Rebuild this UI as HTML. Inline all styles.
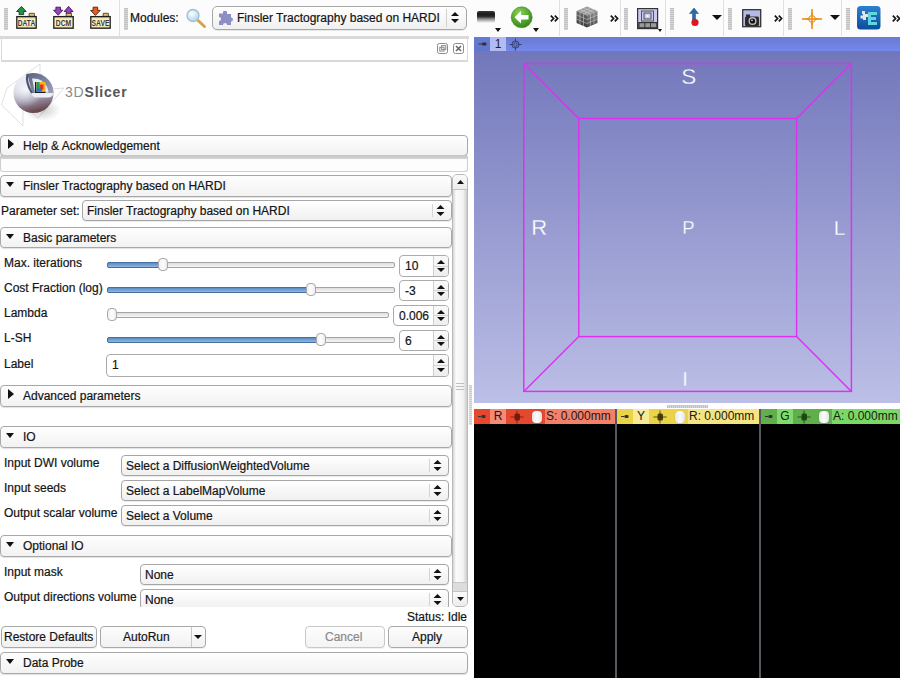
<!DOCTYPE html>
<html><head><meta charset="utf-8">
<style>
*{margin:0;padding:0;box-sizing:border-box}
html,body{width:900px;height:678px;overflow:hidden;background:#fff;font-family:"Liberation Sans",sans-serif}
.a{position:absolute}
.t{position:absolute;font-size:12px;line-height:14px;white-space:nowrap;color:#141414;-webkit-text-stroke:0.2px currentColor}
#tb{left:0;top:0;width:900px;height:37px;background:#fcfcfc;border-bottom:1px solid #d4d4d4}
.grip{position:absolute;top:8px;width:4px;height:22px;background:repeating-linear-gradient(#c2c2c2 0 1px,#d6d6d6 1px 2px)}
.sep{position:absolute;top:0;width:1px;height:36px;background:#e0e0e0}
.btn{position:absolute;border:1px solid #a9a9a9;border-radius:4px;background:linear-gradient(#fdfdfd,#f1f1f1);box-shadow:0 1px 0 rgba(0,0,0,0.06)}
.cb{position:absolute;border:1px solid #a8a8a8;border-radius:4px;background:linear-gradient(#fefefe,#f2f2f2);box-shadow:0 1px 1px rgba(0,0,0,0.12)}
.tri-r{position:absolute;width:0;height:0;border-top:5px solid transparent;border-bottom:5px solid transparent;border-left:6px solid #111}
.tri-d{position:absolute;width:0;height:0;border-left:4.7px solid transparent;border-right:4.7px solid transparent;border-top:5.6px solid #111}
.combo{position:absolute;border:1px solid #a6a6a6;border-radius:4px;background:linear-gradient(#ffffff,#f0f0f0);box-shadow:0 1px 0 rgba(0,0,0,0.08)}
.csep{position:absolute;width:1px;background:#d4d4d4}
.spin{position:absolute;border:1px solid #ababab;border-radius:4px;background:#fff}
.groove{position:absolute;height:6px;border:1px solid #a4a4a4;border-radius:2px;background:linear-gradient(#dedede,#f6f6f6)}
.fill{position:absolute;height:6px;border:1px solid #46709e;border-radius:2px;background:linear-gradient(#5a8cc6,#90b6e0)}
.knob{position:absolute;width:10px;height:13px;border:1px solid #a8a8a8;border-radius:4px;background:linear-gradient(90deg,#f0f0f0,#fdfdfd 50%,#ececec)}
</style></head><body>

<div id="tb" class="a" style="height:36px;border:none"></div>
<div class="grip" style="left:4px"></div>
<svg class="a" style="left:12px;top:3px" width="30" height="30" viewBox="0 0 30 30"><defs><linearGradient id="fdDATA" x1="0" y1="0" x2="0" y2="1"><stop offset="0" stop-color="#e2c870"/><stop offset="0.25" stop-color="#f8eec8"/><stop offset="0.75" stop-color="#fbf4d8"/><stop offset="1" stop-color="#e0c878"/></linearGradient></defs><path d="M9.399999999999999 3.4 L14.2 8.5 L11.7 8.5 L11.7 11.6 L7.099999999999999 11.6 L7.099999999999999 8.5 L4.6 8.5Z" fill="#23904a" stroke="#1a3a22" stroke-width="0.9" stroke-linejoin="round"/><path d="M17 13.4 L17.3 10.3 L22.3 10.3 L22.6 13.4Z" fill="#dcc070" stroke="#3a3020" stroke-width="0.8"/><rect x="4.8" y="13.6" width="19.4" height="11.6" fill="url(#fdDATA)" stroke="#1e1e1e" stroke-width="1.3"/><text x="14.5" y="22.8" font-family="Liberation Sans" font-size="8.6" font-weight="bold" text-anchor="middle" fill="#3a3a3a" textLength="17.5" lengthAdjust="spacingAndGlyphs">DATA</text></svg>
<svg class="a" style="left:49px;top:3px" width="30" height="30" viewBox="0 0 30 30"><defs><linearGradient id="fdDCM" x1="0" y1="0" x2="0" y2="1"><stop offset="0" stop-color="#e2c870"/><stop offset="0.25" stop-color="#f8eec8"/><stop offset="0.75" stop-color="#fbf4d8"/><stop offset="1" stop-color="#e0c878"/></linearGradient></defs><path d="M9.2 12.2 L13.8 7.2 L11.5 7.2 L11.5 4.2 L6.8999999999999995 4.2 L6.8999999999999995 7.2 L4.6 7.2Z" fill="#9a40c0" stroke="#3a1a4a" stroke-width="0.9" stroke-linejoin="round"/><path d="M19.6 3.4 L24.0 8.5 L21.900000000000002 8.5 L21.900000000000002 10.8 L17.3 10.8 L17.3 8.5 L15.2 8.5Z" fill="#9a40c0" stroke="#3a1a4a" stroke-width="0.9" stroke-linejoin="round"/><path d="M17 13.4 L17.3 10.3 L22.3 10.3 L22.6 13.4Z" fill="#dcc070" stroke="#3a3020" stroke-width="0.8"/><rect x="4.8" y="13.6" width="19.4" height="11.6" fill="url(#fdDCM)" stroke="#1e1e1e" stroke-width="1.3"/><text x="14.5" y="22.8" font-family="Liberation Sans" font-size="8.6" font-weight="bold" text-anchor="middle" fill="#3a3a3a" textLength="15.5" lengthAdjust="spacingAndGlyphs">DCM</text></svg>
<svg class="a" style="left:86px;top:3px" width="30" height="30" viewBox="0 0 30 30"><defs><linearGradient id="fdSAVE" x1="0" y1="0" x2="0" y2="1"><stop offset="0" stop-color="#e2c870"/><stop offset="0.25" stop-color="#f8eec8"/><stop offset="0.75" stop-color="#fbf4d8"/><stop offset="1" stop-color="#e0c878"/></linearGradient></defs><path d="M9.399999999999999 12.4 L14.2 7.4 L11.7 7.4 L11.7 4.2 L7.099999999999999 4.2 L7.099999999999999 7.4 L4.6 7.4Z" fill="#e85a1e" stroke="#4a2010" stroke-width="0.9" stroke-linejoin="round"/><path d="M17 13.4 L17.3 10.3 L22.3 10.3 L22.6 13.4Z" fill="#dcc070" stroke="#3a3020" stroke-width="0.8"/><rect x="4.8" y="13.6" width="19.4" height="11.6" fill="url(#fdSAVE)" stroke="#1e1e1e" stroke-width="1.3"/><text x="14.5" y="22.8" font-family="Liberation Sans" font-size="8.6" font-weight="bold" text-anchor="middle" fill="#3a3a3a" textLength="18" lengthAdjust="spacingAndGlyphs">SAVE</text></svg>
<div class="sep" style="left:119px"></div>
<div class="grip" style="left:124px"></div>
<div class="t" style="left:130px;top:11px;color:#111">Modules:</div>
<svg class="a" style="left:185px;top:8px" width="22" height="21" viewBox="0 0 22 21">
 <defs><radialGradient id="lens" cx="0.4" cy="0.35" r="0.7"><stop offset="0" stop-color="#ffffff"/><stop offset="1" stop-color="#a8d4ea"/></radialGradient></defs>
 <line x1="12.5" y1="12" x2="19.5" y2="18.5" stroke="#dca04a" stroke-width="3" stroke-linecap="round"/>
 <circle cx="8" cy="7.5" r="6" fill="url(#lens)" stroke="#9cc2d4" stroke-width="1.3"/>
</svg>
<div class="combo" style="left:212px;top:6px;width:255px;height:24px;border-radius:5px"></div>
<svg class="a" style="left:218px;top:11px" width="16" height="15" viewBox="0 0 16 15">
 <path d="M5 1.5 a2 2 0 0 1 4 0 v1.5 h4 v3.5 a2 2 0 0 1 0 4 v3.5 h-4 a2 2 0 0 0 -4 0 h-4 v-4 a2 2 0 0 0 0 -4 v-3.5 h4 z" fill="#8d8fc4"/>
</svg>
<div class="t" style="left:237px;top:11px">Finsler Tractography based on HARDI</div>
<div class="a" style="left:446px;top:9px;width:1px;height:18px;background:#d0d0d0"></div>
<svg class="a" style="left:450px;top:11px" width="10" height="13" viewBox="0 0 10 13"><path d="M1 5 L5 1 L9 5 Z M1 8 L5 12 L9 8 Z" fill="#111"/></svg>
<div class="a" style="left:477px;top:11px;width:18px;height:12px;border-radius:2px 2px 0 0;background:linear-gradient(#3a3a3a,#1a1a1a 25%,#2a2a2a 45%,#9a9a9a 70%,rgba(255,255,255,0))"></div>
<svg class="a" style="left:495px;top:28px" width="6" height="4"><path d="M0 0 L6 0 L3.0 4Z" fill="#111"/></svg>
<svg class="a" style="left:510px;top:6px" width="24" height="24" viewBox="0 0 24 24">
 <defs><radialGradient id="gr" cx="0.4" cy="0.3" r="0.8"><stop offset="0" stop-color="#8fd45a"/><stop offset="0.6" stop-color="#4da02a"/><stop offset="1" stop-color="#2e7a18"/></radialGradient></defs>
 <circle cx="11.7" cy="11.3" r="10.5" fill="url(#gr)" stroke="#3a8a20" stroke-width="0.6"/>
 <path d="M4.5 11.3 L11 5 L11 9 L18.5 9 L18.5 13.6 L11 13.6 L11 17.6 Z" fill="#fff"/>
</svg>
<svg class="a" style="left:533px;top:28px" width="6" height="4"><path d="M0 0 L6 0 L3.0 4Z" fill="#111"/></svg>
<svg class="a" style="left:550px;top:15px" width="9" height="7" viewBox="0 0 9 7"><path d="M0.8 0.6 L3.6 3.5 L0.8 6.4 M4.8 0.6 L7.6 3.5 L4.8 6.4" fill="none" stroke="#151515" stroke-width="1.7"/></svg>
<div class="sep" style="left:559px"></div>
<div class="grip" style="left:564px"></div>
<svg class="a" style="left:575px;top:5px" width="24" height="24" viewBox="0 0 24 24"><defs><linearGradient id="cl" x1="0" y1="0" x2="0" y2="1"><stop offset="0" stop-color="#6a6a6a"/><stop offset="1" stop-color="#3a3a3a"/></linearGradient><linearGradient id="cr" x1="0" y1="0" x2="0" y2="1"><stop offset="0" stop-color="#8a8a8a"/><stop offset="1" stop-color="#4a4a4a"/></linearGradient></defs><path d="M12 1.5 L22.5 6 L12 10.5 L1.5 6Z" fill="#9a9a9a"/><path d="M15.50 3.00 L5.00 7.50 M8.50 3.00 L19.00 7.50 M19.00 4.50 L8.50 9.00 M5.00 4.50 L15.50 9.00 " stroke="#d8d8d8" stroke-width="0.7" fill="none" opacity="0.7"/><path d="M1.5 6 L12 10.5 L12 22.5 L1.5 18Z" fill="url(#cl)"/><path d="M5.00 7.50 L5.00 19.50 M1.50 10.00 L12.00 14.50 M8.50 9.00 L8.50 21.00 M1.50 14.00 L12.00 18.50 " stroke="#d8d8d8" stroke-width="0.7" fill="none" opacity="0.7"/><path d="M12 10.5 L22.5 6 L22.5 18 L12 22.5Z" fill="url(#cr)"/><path d="M15.50 9.00 L15.50 21.00 M12.00 14.50 L22.50 10.00 M19.00 7.50 L19.00 19.50 M12.00 18.50 L22.50 14.00 " stroke="#d8d8d8" stroke-width="0.7" fill="none" opacity="0.7"/></svg>
<svg class="a" style="left:610px;top:15px" width="9" height="7" viewBox="0 0 9 7"><path d="M0.8 0.6 L3.6 3.5 L0.8 6.4 M4.8 0.6 L7.6 3.5 L4.8 6.4" fill="none" stroke="#151515" stroke-width="1.7"/></svg>
<div class="sep" style="left:620px"></div>
<div class="grip" style="left:624px"></div>
<svg class="a" style="left:637px;top:8px" width="26" height="25" viewBox="0 0 26 25">
 <rect x="0.6" y="0.6" width="20" height="20" fill="#c9c9ef" stroke="#333" stroke-width="1.2"/>
 <rect x="4.5" y="3" width="12" height="10" fill="none" stroke="#555" stroke-width="1"/>
 <rect x="7" y="5" width="7" height="6" fill="none" stroke="#555" stroke-width="1"/>
 <rect x="9.5" y="7" width="2" height="2" fill="#fff"/>
 <rect x="1.2" y="14" width="19" height="6.2" fill="#333"/>
 <rect x="2.5" y="15.2" width="4.8" height="4" fill="#999"/>
 <rect x="8.3" y="15.2" width="4.8" height="4" fill="#999"/>
 <rect x="14" y="15.2" width="5.3" height="4" fill="#999"/>
 <path d="M21 21 L25 21 L23 24Z" fill="#111"/>
</svg>
<div class="sep" style="left:665px"></div>
<div class="grip" style="left:670px"></div>
<svg class="a" style="left:688px;top:7px" width="12" height="21" viewBox="0 0 12 21">
 <path d="M6 1 L10.5 6.5 L7.5 6.5 L7.5 13 L4.5 13 L4.5 6.5 L1.5 6.5 Z" fill="#2a6aa8" stroke="#1c4a78" stroke-width="0.5"/>
 <circle cx="7" cy="15.5" r="3.6" fill="#e0141e"/>
</svg>
<svg class="a" style="left:712px;top:15px" width="10" height="5"><path d="M0 0 L10 0 L5.0 5Z" fill="#111"/></svg>
<div class="sep" style="left:723px"></div>
<div class="grip" style="left:728px"></div>
<svg class="a" style="left:742px;top:9px" width="20" height="19" viewBox="0 0 20 19">
 <rect x="0.7" y="0.7" width="18" height="17" fill="#b8b8e8" stroke="#333" stroke-width="1.3"/>
 <rect x="3" y="7.5" width="14" height="9.5" rx="1.5" fill="#2a2a2a"/>
 <rect x="4" y="5.5" width="4" height="2.5" fill="#2a2a2a"/>
 <circle cx="10.5" cy="12" r="4" fill="#bbb"/>
 <circle cx="10.5" cy="12" r="2.6" fill="#111"/>
 <circle cx="10" cy="11.4" r="0.8" fill="#eee"/>
</svg>
<svg class="a" style="left:774px;top:15px" width="9" height="7" viewBox="0 0 9 7"><path d="M0.8 0.6 L3.6 3.5 L0.8 6.4 M4.8 0.6 L7.6 3.5 L4.8 6.4" fill="none" stroke="#151515" stroke-width="1.7"/></svg>
<div class="sep" style="left:783px"></div>
<div class="grip" style="left:788px"></div>
<svg class="a" style="left:801px;top:8px" width="22" height="22" viewBox="0 0 22 22">
 <g stroke="#e8901a" fill="none">
  <line x1="1" y1="11" x2="21" y2="11" stroke-width="1.6"/>
  <line x1="11" y1="1" x2="11" y2="21" stroke-width="1.6"/>
  <circle cx="11" cy="11" r="3.3" stroke-width="1"/>
 </g>
 <path d="M11 3 L12.5 8.5 L11 8 L9.5 8.5Z M11 19 L12.5 13.5 L11 14 L9.5 13.5Z M3 11 L8.5 9.5 L8 11 L8.5 12.5Z M19 11 L13.5 9.5 L14 11 L13.5 12.5Z" fill="#e8901a"/>
</svg>
<svg class="a" style="left:830px;top:15px" width="10" height="5"><path d="M0 0 L10 0 L5.0 5Z" fill="#111"/></svg>
<div class="sep" style="left:841px"></div>
<div class="grip" style="left:846px"></div>
<svg class="a" style="left:857px;top:6px" width="24" height="24" viewBox="0 0 24 24">
 <defs><linearGradient id="bl" x1="0" y1="0" x2="0" y2="1"><stop offset="0" stop-color="#2f7fd0"/><stop offset="1" stop-color="#0b4e9e"/></linearGradient></defs>
 <rect x="0" y="0" width="23.5" height="23.5" rx="3.5" fill="url(#bl)"/>
 <path d="M11 6 h9 v3 h-6 v2 h5 v3 h-5 v2 h6 v3 h-9 z" fill="#5fd6e0"/>
 <path d="M5 5 l3 0 l0 3 l3 0 l0 3 l-2 0 l0 3 l-3 0 l0 -1.5 l-2.5 0 l0 -3 l2.5 0 l0 -1.5 l-1 0 z" fill="#e6e6e6"/>
</svg>
<svg class="a" style="left:892px;top:15px" width="9" height="7" viewBox="0 0 9 7"><path d="M0.8 0.6 L3.6 3.5 L0.8 6.4 M4.8 0.6 L7.6 3.5 L4.8 6.4" fill="none" stroke="#151515" stroke-width="1.7"/></svg>
<div class="a" style="left:0;top:36px;width:474px;height:642px;background:#fff"></div>
<div class="a" style="left:0;top:36px;width:469px;height:3px;background:#d9d9d9"></div>
<div class="a" style="left:1px;top:39px;width:467px;height:23px;border:1px solid #d9d9d9;border-top:none;border-bottom:2px solid #d9d9d9;background:#fff"></div>
<svg class="a" style="left:436px;top:42px" width="30" height="13" viewBox="0 0 30 13">
 <rect x="1.5" y="1.5" width="10" height="10" rx="2" fill="none" stroke="#8a8a8a" stroke-width="1"/>
 <rect x="3.8" y="5.3" width="4.2" height="3.8" fill="none" stroke="#8a8a8a" stroke-width="1"/>
 <rect x="5.6" y="3.6" width="4.2" height="3.8" fill="none" stroke="#8a8a8a" stroke-width="1"/>
 <rect x="17.5" y="1.5" width="10" height="10" rx="2" fill="none" stroke="#8a8a8a" stroke-width="1"/>
 <path d="M20 4 L25 9 M25 4 L20 9" stroke="#666" stroke-width="1.6"/>
</svg>
<svg class="a" style="left:0;top:62px" width="64" height="64" viewBox="0 0 64 64">
 <defs>
  <linearGradient id="sphL" x1="0.1" y1="0" x2="0.35" y2="1"><stop offset="0" stop-color="#f0f0f6"/><stop offset="0.45" stop-color="#c6c8dc"/><stop offset="0.72" stop-color="#9a93a8"/><stop offset="1" stop-color="#6a4a50"/></linearGradient>
  <radialGradient id="hl" cx="0.3" cy="0.4" r="0.45"><stop offset="0" stop-color="rgba(255,255,255,0.85)"/><stop offset="1" stop-color="rgba(255,255,255,0)"/></radialGradient>
  <radialGradient id="shd" cx="0.5" cy="0.5" r="0.5"><stop offset="0" stop-color="rgba(0,0,0,0.2)"/><stop offset="1" stop-color="rgba(0,0,0,0)"/></radialGradient>
  <linearGradient id="ring" x1="0" y1="0" x2="1" y2="1"><stop offset="0" stop-color="#5c6280"/><stop offset="1" stop-color="#9ca2bc"/></linearGradient>
 </defs>
 <g fill="none" stroke="#d2d2d2" stroke-width="0.7">
  <path d="M40 2 L7 26 L1.5 43 L23 64"/>
  <path d="M40 2 L40 12"/>
  <path d="M53 27 L64 26 L38 56 L23 44"/>
  <path d="M23 44 L23 64"/>
 </g>
 <ellipse cx="42" cy="48" rx="19" ry="11" fill="url(#shd)"/>
 <circle cx="33.5" cy="31" r="20" fill="url(#sphL)"/>
 <circle cx="33.5" cy="31" r="20" fill="url(#hl)"/>
 <path d="M27.5 12 A20 20 0 0 1 53.5 31 L32 31 Z" fill="url(#ring)"/>
 <path d="M32 16.5 A15 15 0 0 1 48.5 30.5 L35 30.5 Z" fill="#e6e8f2"/>
 <path d="M35 20 L35 31 L45.5 31 L45.5 29.5 L36.5 29.5 L36.5 20Z" fill="#1a1a22"/>
 <rect x="36.5" y="20" width="9" height="9.5" fill="#f2b420"/>
 <rect x="36.5" y="20" width="3" height="9.5" fill="#20a050"/>
 <rect x="39.5" y="22.5" width="4" height="5" fill="#e83020"/>
 <rect x="36.5" y="26.5" width="5.5" height="3" fill="#2a70d8"/>
 <path d="M32 31 L53.5 31 Q52.5 35.5 48 35.5 L35 35.5 Q32 34.5 32 31Z" fill="#eeeef6"/>
 <path d="M27.5 12 Q25.5 21 32 31" fill="none" stroke="#4e5470" stroke-width="2.2"/>
</svg>

<div class="a" style="left:65px;top:84px;font-size:14px;line-height:16px;letter-spacing:0.8px;color:#8c8c8c;white-space:nowrap">3D<span style="color:#555;font-weight:bold">Slicer</span></div>
<div class="cb" style="left:0px;top:135px;width:468px;height:21px"></div><div class="tri-r" style="left:8px;top:139px"></div><div class="t" style="left:23px;top:139px">Help &amp; Acknowledgement</div>
<div class="a" style="left:0px;top:156px;width:468px;height:16px;border:1px solid #cfcfcf;border-top:none;border-radius:0 0 3px 3px;background:#fdfdfd"></div>
<div class="a" style="left:1px;top:155px;width:466px;height:4px;background:linear-gradient(#c4c4c4,#d4d4d4)"></div>
<div class="cb" style="left:0px;top:175px;width:452px;height:22px"></div><div class="tri-d" style="left:6px;top:182px"></div><div class="t" style="left:23px;top:179px">Finsler Tractography based on HARDI</div>
<div class="a" style="left:452px;top:174px;width:16px;height:433px;border:1px solid #b8b8b8;border-radius:5px;background:#e6e6e6"></div>
<div class="a" style="left:453px;top:175px;width:14px;height:15px;border-bottom:1px solid #c4c4c4;border-radius:4px 4px 0 0;background:linear-gradient(#fafafa,#ececec)"></div>
<svg class="a" style="left:457px;top:180px" width="7" height="4"><path d="M0 4 L7 4 L3.5 0Z" fill="#111"/></svg>
<div class="a" style="left:453px;top:190px;width:14px;height:393px;border-bottom:1px solid #c8c8c8;background:linear-gradient(90deg,#d4d4d4,#fbfbfb 3px,#f3f3f3 10px,#d6d6d6 13px,#cccccc)"></div>
<div class="a" style="left:456px;top:383px;width:8px;height:1px;background:#c0c0c0;box-shadow:0 3px 0 #c0c0c0,0 6px 0 #c0c0c0"></div>
<div class="a" style="left:453px;top:583px;width:14px;height:9px;background:#dcdcdc;border-bottom:1px solid #c4c4c4"></div>
<div class="a" style="left:453px;top:592px;width:14px;height:14px;border-radius:0 0 4px 4px;background:linear-gradient(#fafafa,#ececec)"></div>
<svg class="a" style="left:457px;top:597px" width="7" height="4"><path d="M0 0 L7 0 L3.5 4Z" fill="#111"/></svg>
<div class="t" style="left:1px;top:204px">Parameter set:</div>
<div class="combo" style="left:82px;top:200px;width:370px;height:21px"></div><div class="t" style="left:87px;top:204px">Finsler Tractography based on HARDI</div><div class="csep" style="left:432px;top:204px;height:13px"></div><svg class="a" style="left:436px;top:204px" width="9" height="13" viewBox="0 0 9 13"><path d="M0.5 5 L4.5 1 L8.5 5 Z M0.5 8 L4.5 12 L8.5 8 Z" fill="#111"/></svg>
<div class="cb" style="left:0px;top:227px;width:452px;height:21px"></div><div class="tri-d" style="left:6px;top:234px"></div><div class="t" style="left:23px;top:231px">Basic parameters</div>
<div class="t" style="left:4px;top:256px">Max. iterations</div><div class="groove" style="left:107px;top:262px;width:288px"></div><div class="fill" style="left:107px;top:262px;width:55px"></div><div class="knob" style="left:158px;top:258px"></div>
<div class="t" style="left:4px;top:281px">Cost Fraction (log)</div><div class="groove" style="left:107px;top:287px;width:288px"></div><div class="fill" style="left:107px;top:287px;width:203px"></div><div class="knob" style="left:306px;top:283px"></div>
<div class="t" style="left:4px;top:306px">Lambda</div><div class="groove" style="left:107px;top:312px;width:282px"></div><div class="knob" style="left:107px;top:308px"></div>
<div class="t" style="left:4px;top:331px">L-SH</div><div class="groove" style="left:107px;top:337px;width:288px"></div><div class="fill" style="left:107px;top:337px;width:213px"></div><div class="knob" style="left:316px;top:333px"></div>
<div class="spin" style="left:399px;top:255px;width:50px;height:22px"></div><div class="a" style="left:433px;top:256px;width:15px;height:20px;border-left:1px solid #cfcfcf;background:linear-gradient(#f9f9f9,#eeeeee);border-radius:0 3px 3px 0"></div><div class="a" style="left:433px;top:266px;width:15px;height:1px;background:#d4d4d4"></div><svg class="a" style="left:437px;top:260px" width="8" height="4"><path d="M0 4 L8 4 L4.0 0Z" fill="#111"/></svg><svg class="a" style="left:437px;top:268px" width="8" height="4"><path d="M0 0 L8 0 L4.0 4Z" fill="#111"/></svg><div class="t" style="left:405px;top:259px">10</div>
<div class="spin" style="left:399px;top:280px;width:50px;height:21px"></div><div class="a" style="left:433px;top:281px;width:15px;height:19px;border-left:1px solid #cfcfcf;background:linear-gradient(#f9f9f9,#eeeeee);border-radius:0 3px 3px 0"></div><div class="a" style="left:433px;top:290px;width:15px;height:1px;background:#d4d4d4"></div><svg class="a" style="left:437px;top:285px" width="8" height="4"><path d="M0 4 L8 4 L4.0 0Z" fill="#111"/></svg><svg class="a" style="left:437px;top:292px" width="8" height="4"><path d="M0 0 L8 0 L4.0 4Z" fill="#111"/></svg><div class="t" style="left:405px;top:284px">-3</div>
<div class="spin" style="left:393px;top:305px;width:56px;height:21px"></div><div class="a" style="left:433px;top:306px;width:15px;height:19px;border-left:1px solid #cfcfcf;background:linear-gradient(#f9f9f9,#eeeeee);border-radius:0 3px 3px 0"></div><div class="a" style="left:433px;top:315px;width:15px;height:1px;background:#d4d4d4"></div><svg class="a" style="left:437px;top:310px" width="8" height="4"><path d="M0 4 L8 4 L4.0 0Z" fill="#111"/></svg><svg class="a" style="left:437px;top:317px" width="8" height="4"><path d="M0 0 L8 0 L4.0 4Z" fill="#111"/></svg><div class="t" style="left:399px;top:309px">0.006</div>
<div class="spin" style="left:399px;top:330px;width:50px;height:21px"></div><div class="a" style="left:433px;top:331px;width:15px;height:19px;border-left:1px solid #cfcfcf;background:linear-gradient(#f9f9f9,#eeeeee);border-radius:0 3px 3px 0"></div><div class="a" style="left:433px;top:340px;width:15px;height:1px;background:#d4d4d4"></div><svg class="a" style="left:437px;top:335px" width="8" height="4"><path d="M0 4 L8 4 L4.0 0Z" fill="#111"/></svg><svg class="a" style="left:437px;top:342px" width="8" height="4"><path d="M0 0 L8 0 L4.0 4Z" fill="#111"/></svg><div class="t" style="left:405px;top:334px">6</div>
<div class="spin" style="left:106px;top:354px;width:343px;height:23px"></div><div class="a" style="left:433px;top:355px;width:15px;height:21px;border-left:1px solid #cfcfcf;background:linear-gradient(#f9f9f9,#eeeeee);border-radius:0 3px 3px 0"></div><div class="a" style="left:433px;top:365px;width:15px;height:1px;background:#d4d4d4"></div><svg class="a" style="left:437px;top:359px" width="8" height="4"><path d="M0 4 L8 4 L4.0 0Z" fill="#111"/></svg><svg class="a" style="left:437px;top:368px" width="8" height="4"><path d="M0 0 L8 0 L4.0 4Z" fill="#111"/></svg><div class="t" style="left:112px;top:358px">1</div>
<div class="t" style="left:4px;top:357px">Label</div>
<div class="cb" style="left:0px;top:385px;width:452px;height:22px"></div><div class="tri-r" style="left:8px;top:389px"></div><div class="t" style="left:23px;top:389px">Advanced parameters</div>
<div class="cb" style="left:0px;top:426px;width:452px;height:22px"></div><div class="tri-d" style="left:6px;top:433px"></div><div class="t" style="left:23px;top:430px">IO</div>
<div class="t" style="left:4px;top:456px">Input DWI volume</div>
<div class="t" style="left:4px;top:481px">Input seeds</div>
<div class="t" style="left:4px;top:506px">Output scalar volume</div>
<div class="combo" style="left:121px;top:455px;width:328px;height:21px"></div><div class="t" style="left:126px;top:459px">Select a DiffusionWeightedVolume</div><div class="csep" style="left:429px;top:459px;height:13px"></div><svg class="a" style="left:433px;top:459px" width="9" height="13" viewBox="0 0 9 13"><path d="M0.5 5 L4.5 1 L8.5 5 Z M0.5 8 L4.5 12 L8.5 8 Z" fill="#111"/></svg>
<div class="combo" style="left:121px;top:480px;width:328px;height:21px"></div><div class="t" style="left:126px;top:484px">Select a LabelMapVolume</div><div class="csep" style="left:429px;top:484px;height:13px"></div><svg class="a" style="left:433px;top:484px" width="9" height="13" viewBox="0 0 9 13"><path d="M0.5 5 L4.5 1 L8.5 5 Z M0.5 8 L4.5 12 L8.5 8 Z" fill="#111"/></svg>
<div class="combo" style="left:121px;top:505px;width:328px;height:21px"></div><div class="t" style="left:126px;top:509px">Select a Volume</div><div class="csep" style="left:429px;top:509px;height:13px"></div><svg class="a" style="left:433px;top:509px" width="9" height="13" viewBox="0 0 9 13"><path d="M0.5 5 L4.5 1 L8.5 5 Z M0.5 8 L4.5 12 L8.5 8 Z" fill="#111"/></svg>
<div class="cb" style="left:0px;top:535px;width:452px;height:22px"></div><div class="tri-d" style="left:6px;top:542px"></div><div class="t" style="left:23px;top:539px">Optional IO</div>
<div class="t" style="left:4px;top:565px">Input mask</div>
<div class="t" style="left:4px;top:590px">Output directions volume</div>
<div class="combo" style="left:140px;top:564px;width:309px;height:21px"></div><div class="t" style="left:145px;top:568px">None</div><div class="csep" style="left:429px;top:568px;height:13px"></div><svg class="a" style="left:433px;top:568px" width="9" height="13" viewBox="0 0 9 13"><path d="M0.5 5 L4.5 1 L8.5 5 Z M0.5 8 L4.5 12 L8.5 8 Z" fill="#111"/></svg>
<div class="a" style="left:0;top:589px;width:452px;height:18px;overflow:hidden"><div class="combo" style="left:140px;top:0px;width:309px;height:21px"></div><div class="t" style="left:145px;top:4px">None</div><div class="csep" style="left:429px;top:4px;height:13px"></div><svg class="a" style="left:433px;top:4px" width="9" height="13" viewBox="0 0 9 13"><path d="M0.5 5 L4.5 1 L8.5 5 Z M0.5 8 L4.5 12 L8.5 8 Z" fill="#111"/></svg></div>
<div class="t" style="left:407px;top:610px">Status: Idle</div>
<div class="btn" style="left:1px;top:626px;width:96px;height:22px"></div>
<div class="t" style="left:4px;top:630px">Restore Defaults</div>
<div class="btn" style="left:100px;top:626px;width:106px;height:22px"></div>
<div class="a" style="left:191px;top:627px;width:1px;height:20px;background:#c8c8c8"></div>
<div class="t" style="left:123px;top:630px">AutoRun</div>
<svg class="a" style="left:194px;top:635px" width="8" height="4"><path d="M0 0 L8 0 L4.0 4Z" fill="#111"/></svg>
<div class="btn" style="left:305px;top:626px;width:80px;height:22px;border-color:#c8c8c8;background:linear-gradient(#fdfdfd,#f4f4f4)"></div>
<div class="t" style="left:325px;top:630px;color:#8a8a8a">Cancel</div>
<div class="btn" style="left:388px;top:626px;width:80px;height:22px"></div>
<div class="t" style="left:412px;top:630px">Apply</div>
<div class="cb" style="left:0px;top:652px;width:468px;height:22px"></div><div class="tri-d" style="left:6px;top:659px"></div><div class="t" style="left:23px;top:656px">Data Probe</div>
<div class="a" style="left:469px;top:385px;width:3px;height:40px;background:repeating-linear-gradient(#cdcdcd 0 1px,#dedede 1px 2px)"></div>
<div class="a" style="left:474px;top:37px;width:426px;height:14px;background:linear-gradient(#6a7bd2,#6d80dc 45%,#7489ec)"></div>
<div class="a" style="left:474px;top:37px;width:16px;height:14px;background:linear-gradient(#667bd4,#6075cc)"></div>
<svg class="a" style="left:478px;top:41px" width="9" height="6" viewBox="0 0 9 6"><path d="M0.5 3 H4" stroke="#333" stroke-width="1"/><rect x="4" y="1.5" width="4.5" height="3" rx="1" fill="#333"/></svg>
<div class="a" style="left:490px;top:37px;width:16px;height:14px;background:#b3bcf2"></div>
<div class="a" style="left:490px;top:37px;width:16px;text-align:center;font-size:12px;line-height:14px;color:#222">1</div>
<svg class="a" style="left:509px;top:38px" width="13" height="13" viewBox="0 0 13 13">
 <circle cx="6.5" cy="6.5" r="3.6" fill="none" stroke="#3a4070" stroke-width="1"/>
 <path d="M6.5 0.5 V4 M6.5 9 V12.5 M0.5 6.5 H4 M9 6.5 H12.5" stroke="#3a4070" stroke-width="1"/>
 <rect x="5" y="5" width="3" height="3" fill="none" stroke="#3a4070" stroke-width="0.8"/>
</svg>
<div class="a" style="left:474px;top:51px;width:426px;height:352px;background:linear-gradient(#7277bb,#bcbfe6)"></div>
<svg class="a" style="left:474px;top:51px" width="426" height="352" viewBox="474 51 426 352">
 <g stroke="#e22ef2" stroke-width="1.45" fill="none">
  <rect x="523.8" y="63.5" width="327.6" height="327.9"/>
  <rect x="578.8" y="118.4" width="217.8" height="218.2"/>
  <line x1="523.8" y1="63.5" x2="578.8" y2="118.4"/>
  <line x1="851.4" y1="63.5" x2="796.6" y2="118.4"/>
  <line x1="523.8" y1="391.4" x2="578.8" y2="336.6"/>
  <line x1="851.4" y1="391.4" x2="796.6" y2="336.6"/>
 </g>
 <g fill="#fff" font-family="Liberation Sans">
  <text x="688.7" y="84" font-size="22.5" text-anchor="middle">S</text>
  <text x="539.2" y="234.7" font-size="22" text-anchor="middle">R</text>
  <text x="688.5" y="234" font-size="18.5" text-anchor="middle">P</text>
  <text x="839.5" y="234.7" font-size="21" text-anchor="middle">L</text>
  <text x="685" y="385.5" font-size="20" text-anchor="middle">I</text>
 </g>
 <g fill="none" font-family="Liberation Sans" stroke-width="0.3">
  <text x="688.7" y="84" font-size="22.5" text-anchor="middle" stroke="#777cbe">S</text>
  <text x="539.2" y="234.7" font-size="22" text-anchor="middle" stroke="#979bd1">R</text>
  <text x="688.5" y="234" font-size="18.5" text-anchor="middle" stroke="#979bd1">P</text>
  <text x="839.5" y="234.7" font-size="21" text-anchor="middle" stroke="#979bd1">L</text>
  <text x="685" y="385.5" font-size="20" text-anchor="middle" stroke="#b7bae3">I</text>
 </g>
</svg>
<div class="a" style="left:667px;top:405px;width:41px;height:3px;background:repeating-linear-gradient(90deg,#c0c0c0 0 1px,#d8d8d8 1px 2px)"></div>
<div class="a" style="left:474px;top:424px;width:426px;height:254px;background:#000"></div>
<div class="a" style="left:615px;top:409px;width:2px;height:269px;background:#56565e"></div>
<div class="a" style="left:759px;top:409px;width:2px;height:269px;background:#56565e"></div>
<div class="a" style="left:474px;top:409px;width:141px;height:15px;background:#e6482f"></div><svg class="a" style="left:478px;top:414px" width="8" height="5" viewBox="0 0 8 5"><path d="M0 2.5 H3.5" stroke="#333" stroke-width="1"/><rect x="3.5" y="1" width="4" height="3" rx="1" fill="#333"/></svg><div class="a" style="left:490px;top:409px;width:16px;height:15px;background:#f48a78"></div><div class="a" style="left:490px;top:409px;width:16px;text-align:center;font-size:12px;line-height:15px;color:#201818">R</div><svg class="a" style="left:510px;top:410px" width="14" height="14" viewBox="0 0 14 14"><path d="M7 0.5 V13.5 M0.5 7 H13.5" stroke="#6a1a10" stroke-width="0.8"/><rect x="4.5" y="3.5" width="5.5" height="7" rx="1.5" fill="#6a1a10" opacity="0.9"/></svg><div class="a" style="left:532px;top:411px;width:10px;height:12px;border-radius:4px;background:linear-gradient(90deg,#e6e6e6,#fcfcfc,#e2e2e2);box-shadow:0 0 1px rgba(0,0,0,0.3)"></div><div class="a" style="left:545px;top:409px;width:70px;height:15px;background:#f5806a"></div><div class="a" style="left:546px;top:409px;font-size:12px;line-height:15px;color:#201818;white-space:nowrap">S: 0.000mm</div>
<div class="a" style="left:617px;top:409px;width:142px;height:15px;background:#eAd346"></div><svg class="a" style="left:621px;top:414px" width="8" height="5" viewBox="0 0 8 5"><path d="M0 2.5 H3.5" stroke="#333" stroke-width="1"/><rect x="3.5" y="1" width="4" height="3" rx="1" fill="#333"/></svg><div class="a" style="left:633px;top:409px;width:16px;height:15px;background:#f7ea98"></div><div class="a" style="left:633px;top:409px;width:16px;text-align:center;font-size:12px;line-height:15px;color:#201818">Y</div><svg class="a" style="left:653px;top:410px" width="14" height="14" viewBox="0 0 14 14"><path d="M7 0.5 V13.5 M0.5 7 H13.5" stroke="#3a3208" stroke-width="0.8"/><rect x="4.5" y="3.5" width="5.5" height="7" rx="1.5" fill="#3a3208" opacity="0.9"/></svg><div class="a" style="left:675px;top:411px;width:10px;height:12px;border-radius:4px;background:linear-gradient(90deg,#e6e6e6,#fcfcfc,#e2e2e2);box-shadow:0 0 1px rgba(0,0,0,0.3)"></div><div class="a" style="left:688px;top:409px;width:71px;height:15px;background:#f5e482"></div><div class="a" style="left:689px;top:409px;font-size:12px;line-height:15px;color:#201818;white-space:nowrap">R: 0.000mm</div>
<div class="a" style="left:761px;top:409px;width:139px;height:15px;background:#60ae4c"></div><svg class="a" style="left:765px;top:414px" width="8" height="5" viewBox="0 0 8 5"><path d="M0 2.5 H3.5" stroke="#333" stroke-width="1"/><rect x="3.5" y="1" width="4" height="3" rx="1" fill="#333"/></svg><div class="a" style="left:777px;top:409px;width:16px;height:15px;background:#7fdc6c"></div><div class="a" style="left:777px;top:409px;width:16px;text-align:center;font-size:12px;line-height:15px;color:#201818">G</div><svg class="a" style="left:797px;top:410px" width="14" height="14" viewBox="0 0 14 14"><path d="M7 0.5 V13.5 M0.5 7 H13.5" stroke="#1a4010" stroke-width="0.8"/><rect x="4.5" y="3.5" width="5.5" height="7" rx="1.5" fill="#1a4010" opacity="0.9"/></svg><div class="a" style="left:819px;top:411px;width:10px;height:12px;border-radius:4px;background:linear-gradient(90deg,#e6e6e6,#fcfcfc,#e2e2e2);box-shadow:0 0 1px rgba(0,0,0,0.3)"></div><div class="a" style="left:832px;top:409px;width:68px;height:15px;background:#7ad866"></div><div class="a" style="left:833px;top:409px;font-size:12px;line-height:15px;color:#201818;white-space:nowrap">A: 0.000mm</div>
</body></html>
